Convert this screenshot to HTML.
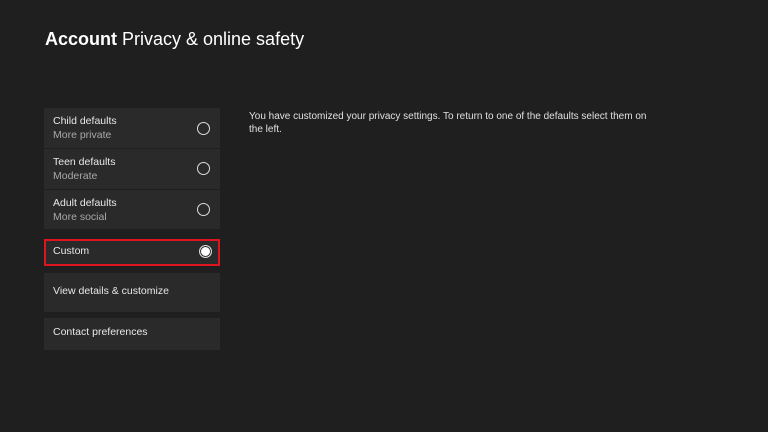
<!DOCTYPE html><html><head><style>
body{margin:0;width:768px;height:432px;background:#1f1f1f;font-family:"Liberation Sans",sans-serif;color:#e6e6e6;position:relative;overflow:hidden}
.t{position:absolute;left:45px;top:29px;font-size:18px;color:#fff}
.t b{font-weight:bold}
.r{position:absolute;left:44px;width:176px;background:#2a2a2a}
.l1{position:absolute;left:9px;font-size:10.5px;color:#e8e8e8}
.l2{position:absolute;left:9px;font-size:10.5px;color:#a8a8a8}
.c{position:absolute;left:153px;width:11px;height:11px;border:1.3px solid #ddd;border-radius:50%}
.d{position:absolute;left:249px;top:110px;font-size:10px;line-height:13px;color:#e0e0e0;width:405px}
</style></head><body>
<div class="t"><b>Account</b> Privacy &amp; online safety</div>
<div class="r" style="top:108px;height:40px"><div class="l1" style="top:7px">Child defaults</div><div class="l2" style="top:21px">More private</div><div class="c" style="top:14px"></div></div>
<div class="r" style="top:149px;height:40px"><div class="l1" style="top:7px">Teen defaults</div><div class="l2" style="top:21px">Moderate</div><div class="c" style="top:13px"></div></div>
<div class="r" style="top:190px;height:39px"><div class="l1" style="top:7px">Adult defaults</div><div class="l2" style="top:21px">More social</div><div class="c" style="top:13px"></div></div>
<div class="r" style="top:239px;height:27px;left:44px;width:176px;box-sizing:border-box;border:2px solid #e0141e"><div class="l1" style="top:4px;left:7px">Custom</div><div class="c" style="top:4px;left:153px;background:#fff;box-shadow:inset 0 0 0 1px #2a2a2a"></div></div>
<div class="r" style="top:273px;height:39px"><div class="l1" style="top:12px">View details &amp; customize</div></div>
<div class="r" style="top:318px;height:32px"><div class="l1" style="top:8px">Contact preferences</div></div>
<div class="d">You have customized your privacy settings. To return to one of the defaults select them on the left.</div>
</body></html>
